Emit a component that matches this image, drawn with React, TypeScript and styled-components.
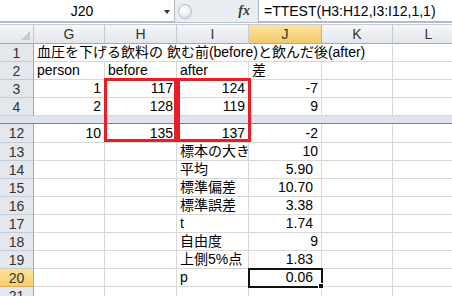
import styled, { createGlobalStyle, css } from 'styled-components';

const GlobalStyle = createGlobalStyle`
  html, body {
    margin: 0;
    padding: 0;
    background: #ffffff;
  }
  body {
    font-family: "Liberation Sans", "Noto Sans CJK JP", sans-serif;
    font-size: 14px;
    color: #000;
  }
`;

const Page = styled.div`
  width: 452px;
  height: 296px;
  overflow: hidden;
`;

const FormulaBar = styled.div`
  display: flex;
  height: 22px;
  background: #e9ecf0;
  border-bottom: 1px solid #b6bec9;
`;

const NameBox = styled.div`
  position: relative;
  width: 175px;
  display: flex;
  align-items: center;
  justify-content: center;
  padding-right: 10px;
  box-sizing: border-box;
  background: #fff;
  border-right: 1px solid #b1b8c2;
  border-bottom: 1px solid #b1b8c2;
  font-size: 14px;
`;

const DropArrow = styled.span`
  position: absolute;
  right: 4px;
  top: 10px;
  width: 0;
  height: 0;
  border-left: 3px solid transparent;
  border-right: 3px solid transparent;
  border-top: 4px solid #333;
`;

const Splitter = styled.div`
  width: 14px;
  height: 15px;
  margin: 4px 0 0 3px;
  border-radius: 50%;
  background: radial-gradient(circle at 40% 40%, #ffffff 0%, #eef0f3 45%, #c9ced6 100%);
  border: 1px solid #bcc3cc;
  box-sizing: border-box;
`;

const FxButton = styled.div`
  width: 66px;
  display: flex;
  align-items: center;
  justify-content: flex-end;
  padding-right: 8px;
  box-sizing: border-box;
  font-family: "Liberation Serif", serif;
  font-style: italic;
  font-weight: bold;
  font-size: 14px;
  color: #3a3a3a;
`;

const FormulaInput = styled.div`
  flex: 1;
  display: flex;
  align-items: center;
  padding-left: 5px;
  background: #fff;
  border-left: 1px solid #b1b8c2;
  border-bottom: 1px solid #b1b8c2;
  font-size: 14px;
  white-space: nowrap;
`;

const BarGap = styled.div`
  height: 1px;
  background: #fff;
  border-bottom: 1px solid #c5ccd6;
`;

const Sheet = styled.div`
  position: relative;
`;

const Grid = styled.div`
  display: grid;
  grid-template-columns: 34px 71px 72px 72px 73px 71px 72px;
  grid-auto-rows: auto;
`;

const headerBase = css`
  display: flex;
  align-items: center;
  justify-content: center;
  box-sizing: border-box;
  color: #333;
  font-size: 14px;
`;

const Corner = styled.div`
  ${headerBase};
  position: relative;
  height: 19px;
  background: linear-gradient(#f7f8fa, #e2e5ea);
  border-right: 1px solid #c4cad3;
  border-bottom: 1px solid #9ea7b3;
  &::after {
    content: '';
    position: absolute;
    right: 3px;
    bottom: 3px;
    width: 0;
    height: 0;
    border-left: 9px solid transparent;
    border-bottom: 9px solid #c8ccd2;
  }
`;

const ColHead = styled.div<{ $active?: boolean }>`
  ${headerBase};
  height: 19px;
  background: ${(p) =>
    p.$active ? 'linear-gradient(#fbe3a3, #f4c965)' : 'linear-gradient(#f7f8fa, #e2e5ea)'};
  border-right: 1px solid ${(p) => (p.$active ? '#e3ad4f' : '#c4cad3')};
  border-bottom: 1px solid ${(p) => (p.$active ? '#e0a43c' : '#9ea7b3')};
`;

const RowHead = styled.div<{ $active?: boolean; $tall?: boolean }>`
  ${headerBase};
  height: ${(p) => (p.$tall ? 19 : 18)}px;
  background: ${(p) => (p.$active ? 'linear-gradient(#fbe19c, #f6cf6c)' : '#e4e7ec')};
  border-right: 1px solid ${(p) => (p.$active ? '#e0a43c' : '#9ea7b3')};
  border-bottom: 1px solid ${(p) => (p.$active ? '#e3ad4f' : '#c6ccd4')};
`;

const Cell = styled.div<{ $right?: boolean; $pad?: number; $span?: number; $tall?: boolean; $selected?: boolean }>`
  position: relative;
  height: ${(p) => (p.$tall ? 19 : 18)}px;
  box-sizing: border-box;
  display: flex;
  align-items: flex-end;
  justify-content: ${(p) => (p.$right ? 'flex-end' : 'flex-start')};
  padding: 0 ${(p) => p.$pad ?? 3}px 0 3px;
  line-height: 17px;
  white-space: nowrap;
  overflow: hidden;
  border-right: 1px solid #d8d8d8;
  border-bottom: 1px solid #d8d8d8;
  ${(p) => p.$span && `grid-column: span ${p.$span};`}
  ${(p) =>
    p.$selected &&
    css`
      overflow: visible;
      outline: 2px solid #111;
      outline-offset: -1px;
      z-index: 2;
      &::after {
        content: '';
        position: absolute;
        right: -3px;
        bottom: -3px;
        width: 6px;
        height: 6px;
        background: #111;
        border: 1px solid #fff;
        box-sizing: border-box;
      }
    `}
`;

const SplitBand = styled.div`
  grid-column: 1 / -1;
  height: 8px;
  box-sizing: border-box;
  background: #dfe3ee;
  border-bottom: 1px solid #7c7f86;
`;

const RedBox = styled.div<{ $left: number; $width: number }>`
  position: absolute;
  top: 53px;
  left: ${(p) => p.$left}px;
  width: ${(p) => p.$width}px;
  height: 64px;
  box-sizing: border-box;
  border: 3px solid #ec1c24;
  pointer-events: none;
`;

type Row = {
  n: string;
  tall?: boolean;
  cells: { v?: string; right?: boolean; pad?: number; span?: number; selected?: boolean }[];
};

const topRows: Row[] = [
  {
    n: '1',
    cells: [{ v: '血圧を下げる飲料の 飲む前(before)と飲んだ後(after)', span: 5 }, {}],
  },
  { n: '2', cells: [{ v: 'person' }, { v: 'before' }, { v: 'after' }, { v: '差' }, {}, {}] },
  {
    n: '3',
    cells: [{ v: '1', right: true }, { v: '117', right: true }, { v: '124', right: true }, { v: '-7', right: true }, {}, {}],
  },
  {
    n: '4',
    cells: [{ v: '2', right: true }, { v: '128', right: true }, { v: '119', right: true }, { v: '9', right: true }, {}, {}],
  },
];

const stat = (label: string, value: string, pad = 3, selected = false) => [
  {},
  {},
  { v: label },
  { v: value, right: true, pad, selected },
  {},
  {},
];

const bottomRows: Row[] = [
  {
    n: '12',
    tall: true,
    cells: [{ v: '10', right: true }, { v: '135', right: true }, { v: '137', right: true }, { v: '-2', right: true }, {}, {}],
  },
  { n: '13', cells: stat('標本の大きさ', '10') },
  { n: '14', cells: stat('平均', '5.90', 8) },
  { n: '15', cells: stat('標準偏差', '10.70', 8) },
  { n: '16', cells: stat('標準誤差', '3.38', 8) },
  { n: '17', cells: stat('t', '1.74', 8) },
  { n: '18', cells: stat('自由度', '9') },
  { n: '19', cells: stat('上側5%点', '1.83', 8) },
  { n: '20', cells: stat('p', '0.06', 8, true) },
  { n: '21', cells: stat('', '') },
];

const columns = ['G', 'H', 'I', 'J', 'K', 'L'];

function renderRow(row: Row) {
  return [
    <RowHead key={`h${row.n}`} $active={row.n === '20'} $tall={row.tall}>
      {row.n}
    </RowHead>,
    ...row.cells.map((c, i) => (
      <Cell
        key={`${row.n}-${i}`}
        $right={c.right}
        $pad={c.pad}
        $span={c.span}
        $tall={row.tall}
        $selected={c.selected}
      >
        {c.v}
      </Cell>
    )),
  ];
}

function App() {
  return (
    <Page>
      <GlobalStyle />
      <FormulaBar>
        <NameBox>
          J20
          <DropArrow />
        </NameBox>
        <Splitter />
        <FxButton>fx</FxButton>
        <FormulaInput>=TTEST(H3:H12,I3:I12,1,1)</FormulaInput>
      </FormulaBar>
      <BarGap />
      <Sheet>
        <Grid>
          <Corner />
          {columns.map((c) => (
            <ColHead key={c} $active={c === 'J'}>
              {c}
            </ColHead>
          ))}
          {topRows.map(renderRow)}
          <SplitBand />
          {bottomRows.map(renderRow)}
        </Grid>
        <RedBox $left={104} $width={73} />
        <RedBox $left={177} $width={74} />
      </Sheet>
    </Page>
  );
}

export default App;
